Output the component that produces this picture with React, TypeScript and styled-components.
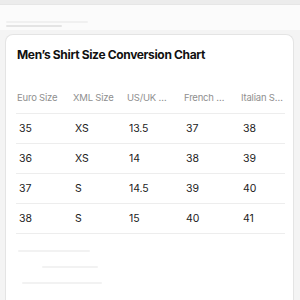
import React from "react";
import styled, { createGlobalStyle } from "styled-components";

const GlobalStyle = createGlobalStyle`
  html, body {
    margin: 0;
    padding: 0;
    background: #f4f4f4;
    font-family: Inter, "Noto Sans", "Liberation Sans", sans-serif;
    -webkit-font-smoothing: antialiased;
  }
`;

const Page = styled.div`
  width: 300px;
  height: 300px;
  overflow: hidden;
  display: flex;
  flex-direction: column;
`;

const TopStrip = styled.div`
  height: 4px;
  background: #ececec;
  border-bottom: 1px solid #e6e6e6;
`;

const NavBar = styled.div`
  height: 22px;
  background: #fbfbfb;
  display: flex;
  flex-direction: column;
  justify-content: flex-end;
  padding: 0 0 3px 6px;
  gap: 2px;
`;

const GhostLine = styled.div<{ $w: number; $shade?: string; $indent?: number }>`
  width: ${(p) => p.$w}px;
  margin-left: ${(p) => p.$indent || 0}px;
  height: 2px;
  border-radius: 1px;
  background: ${(p) => p.$shade || "#ececec"};
  filter: blur(0.6px);
`;

const Body = styled.div`
  flex: 1;
  padding: 4px 6px 0 5px;
`;

const Card = styled.div`
  background: #fff;
  border: 1px solid #e4e4e4;
  border-bottom: none;
  border-radius: 8px 8px 0 0;
  height: 100%;
  padding: 11px 8px 0 10px;
  box-sizing: border-box;
`;

const Title = styled.h2`
  margin: 0 0 20px 1px;
  font-size: 12px;
  line-height: 17px;
  font-weight: 700;
  color: #111;
  letter-spacing: -0.35px;
`;

const Table = styled.div`
  display: grid;
  grid-template-columns: 56px 54px 57px 57px 1fr;
  width: 269px;
`;

const HeadCell = styled.div`
  height: 30px;
  line-height: 30px;
  padding-left: 1px;
  font-size: 9.5px;
  letter-spacing: -0.2px;
  color: #8f8f8f;
  white-space: nowrap;
  border-bottom: 1px solid #ededed;
`;

const Cell = styled.div`
  height: 29px;
  line-height: 30px;
  padding-left: 3px;
  font-size: 10.5px;
  letter-spacing: -0.1px;
  color: #222;
  border-bottom: 1px solid #ededed;
`;

const Footer = styled.div`
  display: flex;
  flex-direction: column;
  gap: 14px;
  padding: 16px 0 0 2px;
`;

// header labels as the narrow columns show them
const headers = ["Euro Size", "XML Size", "US/UK …", "French …", "Italian S…"];

const rows = [
  ["35", "XS", "13.5", "37", "38"],
  ["36", "XS", "14", "38", "39"],
  ["37", "S", "14.5", "39", "40"],
  ["38", "S", "15", "40", "41"],
];

const App = () => {
  return (
    <Page>
      <GlobalStyle />
      <TopStrip />
      <NavBar>
        <GhostLine $w={82} $shade="#f0f0f0" />
        <GhostLine $w={56} $shade="#e4e4e4" />
      </NavBar>
      <Body>
        <Card>
          <Title>Men’s Shirt Size Conversion Chart</Title>
          <Table>
            {headers.map((h) => (
              <HeadCell key={h}>{h}</HeadCell>
            ))}
            {rows.map((row, r) =>
              row.map((value, i) => <Cell key={`${r}-${i}`}>{value}</Cell>)
            )}
          </Table>
          <Footer>
            <GhostLine $w={72} $shade="#f2f2f2" />
            <GhostLine $w={56} $shade="#f2f2f2" $indent={24} />
            <GhostLine $w={80} $shade="#f2f2f2" $indent={4} />
          </Footer>
        </Card>
      </Body>
    </Page>
  );
};

export default App;
